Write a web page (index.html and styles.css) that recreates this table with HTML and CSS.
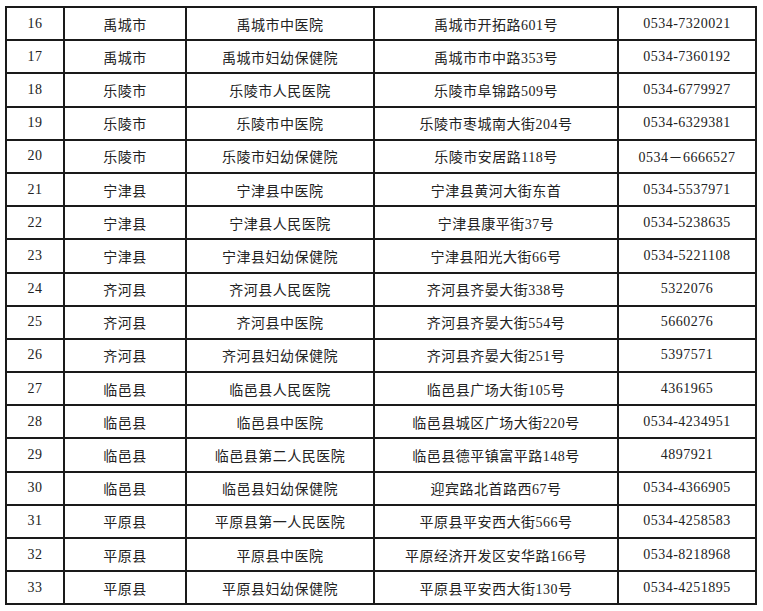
FILE: index.html
```html
<!DOCTYPE html>
<html lang="zh">
<head>
<meta charset="utf-8">
<link rel="stylesheet" href="styles.css">
</head>
<body>
<table class="list">
<colgroup><col class="c1"><col class="c2"><col class="c3"><col class="c4"><col class="c5"></colgroup>
<tbody>
<tr><td>16</td><td>禹城市</td><td>禹城市中医院</td><td>禹城市开拓路601号</td><td>0534-7320021</td></tr>
<tr><td>17</td><td>禹城市</td><td>禹城市妇幼保健院</td><td>禹城市市中路353号</td><td>0534-7360192</td></tr>
<tr><td>18</td><td>乐陵市</td><td>乐陵市人民医院</td><td>乐陵市阜锦路509号</td><td>0534-6779927</td></tr>
<tr><td>19</td><td>乐陵市</td><td>乐陵市中医院</td><td>乐陵市枣城南大街204号</td><td>0534-6329381</td></tr>
<tr><td>20</td><td>乐陵市</td><td>乐陵市妇幼保健院</td><td>乐陵市安居路118号</td><td>0534－6666527</td></tr>
<tr><td>21</td><td>宁津县</td><td>宁津县中医院</td><td>宁津县黄河大街东首</td><td>0534-5537971</td></tr>
<tr><td>22</td><td>宁津县</td><td>宁津县人民医院</td><td>宁津县康平街37号</td><td>0534-5238635</td></tr>
<tr><td>23</td><td>宁津县</td><td>宁津县妇幼保健院</td><td>宁津县阳光大街66号</td><td>0534-5221108</td></tr>
<tr><td>24</td><td>齐河县</td><td>齐河县人民医院</td><td>齐河县齐晏大街338号</td><td>5322076</td></tr>
<tr><td>25</td><td>齐河县</td><td>齐河县中医院</td><td>齐河县齐晏大街554号</td><td>5660276</td></tr>
<tr><td>26</td><td>齐河县</td><td>齐河县妇幼保健院</td><td>齐河县齐晏大街251号</td><td>5397571</td></tr>
<tr><td>27</td><td>临邑县</td><td>临邑县人民医院</td><td>临邑县广场大街105号</td><td>4361965</td></tr>
<tr><td>28</td><td>临邑县</td><td>临邑县中医院</td><td>临邑县城区广场大街220号</td><td>0534-4234951</td></tr>
<tr><td>29</td><td>临邑县</td><td>临邑县第二人民医院</td><td>临邑县德平镇富平路148号</td><td>4897921</td></tr>
<tr><td>30</td><td>临邑县</td><td>临邑县妇幼保健院</td><td>迎宾路北首路西67号</td><td>0534-4366905</td></tr>
<tr><td>31</td><td>平原县</td><td>平原县第一人民医院</td><td>平原县平安西大街566号</td><td>0534-4258583</td></tr>
<tr><td>32</td><td>平原县</td><td>平原县中医院</td><td>平原经济开发区安华路166号</td><td>0534-8218968</td></tr>
<tr><td>33</td><td>平原县</td><td>平原县妇幼保健院</td><td>平原县平安西大街130号</td><td>0534-4251895</td></tr>
</tbody>
</table>
</body>
</html>
```
FILE: styles.css
```css
html, body {
  margin: 0;
  background: #fff;
}
body {
  padding: 6px 0 0 5px;
}
.list {
  border-collapse: collapse;
  table-layout: fixed;
  width: 750px;
  font-family: "Liberation Serif", "Noto Sans CJK SC", serif;
  font-size: 14px;
  color: #222;
}
.c1 { width: 58px; }
.c2 { width: 122px; }
.c3 { width: 188px; }
.c4 { width: 244px; }
.c5 { width: 138px; }
.list td {
  border: 2px solid #1a1a1a;
  height: 31.2px;
  padding: 0;
  text-align: center;
  vertical-align: middle;
  letter-spacing: 0.5px;
  white-space: nowrap;
}
```
